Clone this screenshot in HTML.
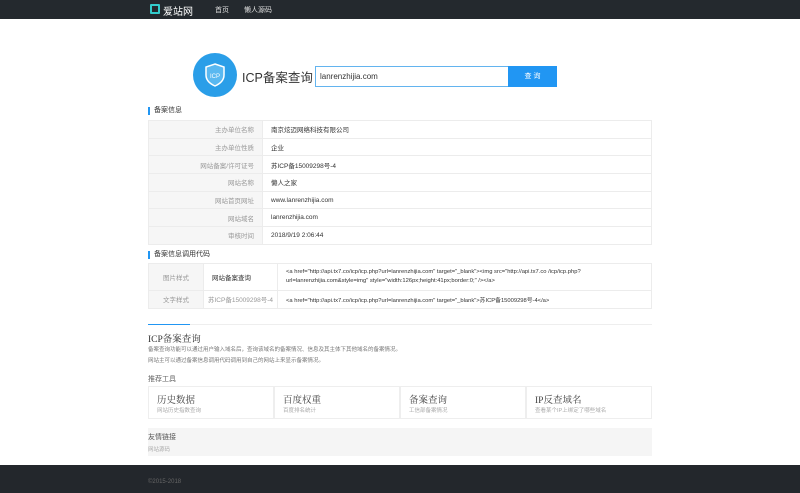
<!DOCTYPE html>
<html><head><meta charset="utf-8"><style>
*{margin:0;padding:0;box-sizing:border-box}
body{width:800px;height:493px;overflow:hidden;background:#fff;font-family:"Liberation Sans","Noto Sans CJK SC",sans-serif;color:#333;position:relative;font-size:7px}
.a{position:absolute}
.nav{left:0;top:0;width:800px;height:19px;background:#24292e}
.nav span{position:absolute;color:#ddd;font-size:7px;top:5px}
table{border-collapse:collapse;position:absolute;left:148px;width:504px;table-layout:fixed}
td{border:1px solid #ececec;font-size:6.5px;height:17.7px;padding:0 8px;white-space:nowrap;overflow:hidden}
td.l{background:#f6f6f6;color:#999;text-align:right}
.sec{font-size:7px;color:#333;border-left:2px solid #2196f3;padding-left:4px;line-height:8px}
.card{position:absolute;top:386px;width:126px;height:33px;border:1px solid #eee;padding:5px 8px}
.card b{display:block;font-weight:normal;font-size:9.5px;color:#444;font-family:"Liberation Serif","Noto Serif CJK SC",serif}
.card i{font-style:normal;font-size:5.5px;color:#aaa}
</style></head><body>
<div class="a nav">
<div class="a" style="left:150px;top:4px;width:10px;height:10px;border:2px solid #3cc;border-radius:1px"></div>
<span style="left:163px;top:3px;font-size:10px;color:#fff">爱站网</span>
<span style="left:215px">首页</span><span style="left:244px">懒人源码</span>
</div>
<div class="a" style="left:193px;top:53px;width:44px;height:44px;border-radius:50%;background:#2a9ee8"></div>
<svg class="a" style="left:201px;top:60px" width="28" height="30" viewBox="0 0 28 30"><path d="M14 4 L23 7 L23 15 Q23 22 14 26 Q5 22 5 15 L5 7 Z" fill="#5ab8f0" stroke="#fff" stroke-width="1.5"/><text x="14" y="18" font-size="6" fill="#fff" text-anchor="middle" font-family="Liberation Sans">ICP</text></svg>
<div class="a" style="left:242px;top:67px;font-size:12.5px;color:#333;white-space:nowrap">ICP备案查询</div>
<div class="a" style="left:315px;top:66px;width:194px;height:21px;border:1px solid #63b4ef;font-size:8px;padding:5px 4px;color:#333">lanrenzhijia.com</div>
<div class="a" style="left:508px;top:66px;width:49px;height:21px;background:#2196f3;color:#fff;font-size:7px;text-align:center;line-height:21px">查 询</div>
<div class="a sec" style="left:148px;top:107px">备案信息</div>
<table style="top:120px">
<colgroup><col style="width:114px"><col></colgroup>
<tr><td class="l">主办单位名称</td><td>南京炫迈网络科技有限公司</td></tr>
<tr><td class="l">主办单位性质</td><td>企业</td></tr>
<tr><td class="l">网站备案/许可证号</td><td>苏ICP备15009298号-4</td></tr>
<tr><td class="l">网站名称</td><td>懒人之家</td></tr>
<tr><td class="l">网站首页网址</td><td>www.lanrenzhijia.com</td></tr>
<tr><td class="l">网站域名</td><td>lanrenzhijia.com</td></tr>
<tr><td class="l">审核时间</td><td>2018/9/19 2:06:44</td></tr>
</table>
<div class="a sec" style="left:148px;top:251px">备案信息调用代码</div>
<table style="top:263px">
<colgroup><col style="width:55px"><col style="width:74px"><col></colgroup>
<tr><td class="l" style="text-align:center;height:27px">图片样式</td><td>网站备案查询</td><td style="font-size:5.8px;line-height:9px;white-space:normal">&lt;a href="http://api.tx7.co/icp/icp.php?url=lanrenzhijia.com" target="_blank"&gt;&lt;img src="http://api.tx7.co /icp/icp.php?url=lanrenzhijia.com&amp;style=img" style="width:126px;height:41px;border:0;" /&gt;&lt;/a&gt;</td></tr>
<tr><td class="l" style="text-align:center">文字样式</td><td style="color:#999;padding:0 4px">苏ICP备15009298号-4</td><td style="font-size:5.8px">&lt;a href="http://api.tx7.co/icp/icp.php?url=lanrenzhijia.com" target="_blank"&gt;苏ICP备15009298号-4&lt;/a&gt;</td></tr>
</table>
<div class="a" style="left:148px;top:324px;width:504px;height:1px;background:#eee"></div>
<div class="a" style="left:148px;top:324px;width:42px;height:1px;background:#2196f3"></div>
<div class="a" style="left:148px;top:331px;font-size:9.5px;font-family:'Liberation Serif','Noto Serif CJK SC',serif">ICP备案查询</div>
<div class="a" style="left:148px;top:345px;font-size:5.5px;color:#777;line-height:11px">备案查询功能可以通过用户输入域名后，查询该域名的备案情况、信息及其主体下其他域名的备案情况。<br>网站主可以通过备案信息调用代码调用到自己的网站上来显示备案情况。</div>
<div class="a" style="left:148px;top:374px;font-size:7px;color:#666">推荐工具</div>
<div class="card" style="left:148px"><b>历史数据</b><i>网站历史指数查询</i></div>
<div class="card" style="left:274px"><b>百度权重</b><i>百度排名统计</i></div>
<div class="card" style="left:400px"><b>备案查询</b><i>工信部备案情况</i></div>
<div class="card" style="left:526px"><b>IP反查域名</b><i>查看某个IP上绑定了哪些域名</i></div>
<div class="a" style="left:148px;top:428px;width:504px;height:28px;background:#f5f5f5;padding:4px 0 0 0">
<div style="font-size:7px;color:#555">友情链接</div><div style="font-size:5.5px;color:#aaa;margin-top:3px">网站源码</div></div>
<div class="a" style="left:0;top:465px;width:800px;height:28px;background:#23272c"></div>
<div class="a" style="left:148px;top:479px;font-size:6px;color:#666">©2015-2018</div>
</body></html>
